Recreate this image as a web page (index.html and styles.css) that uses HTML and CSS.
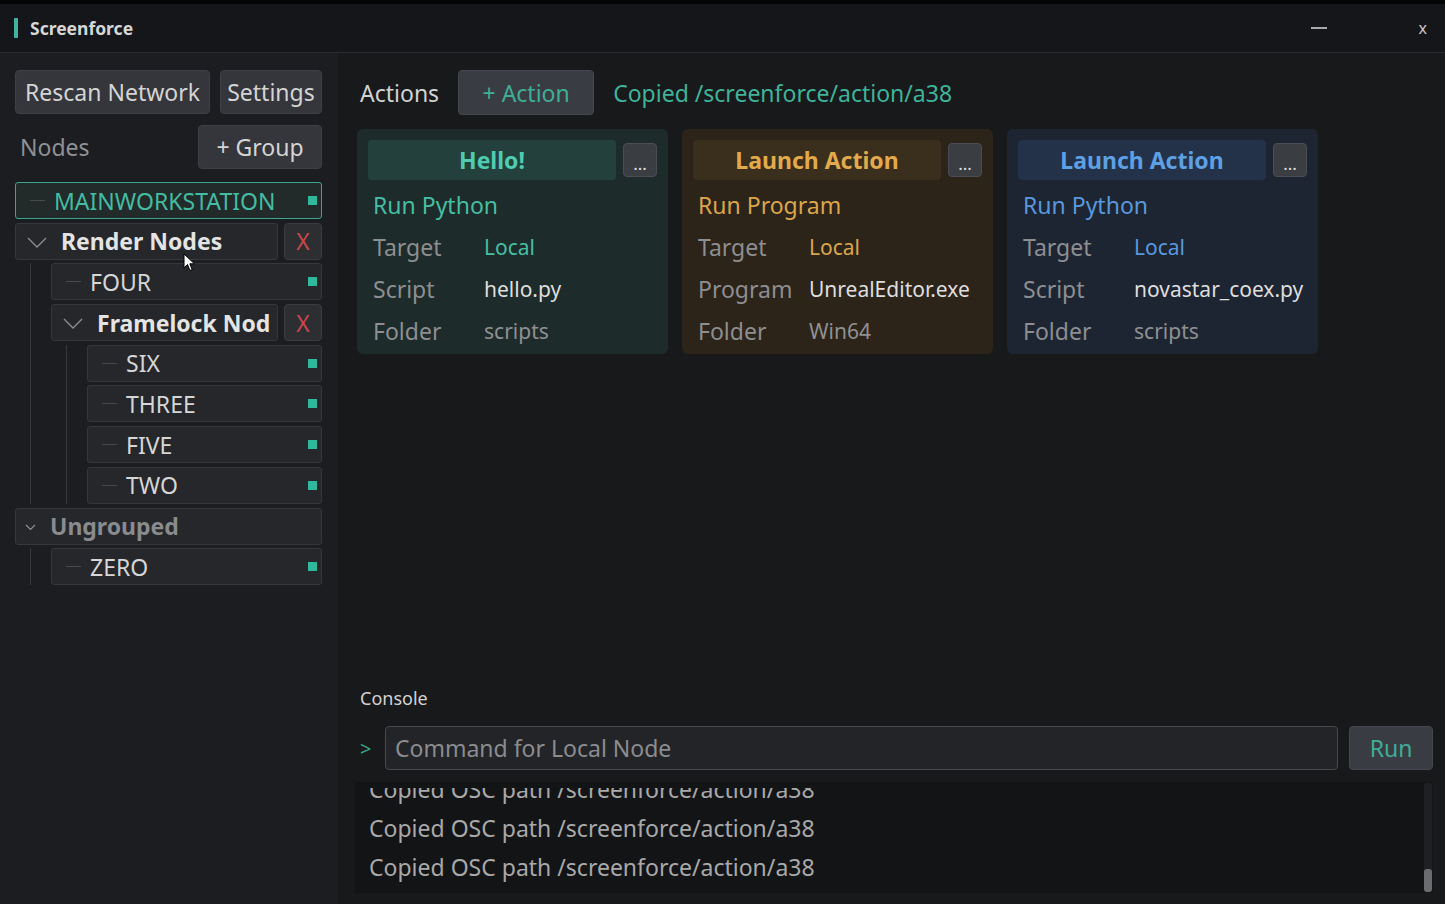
FILE: index.html
```html
<!DOCTYPE html>
<html lang="en">
<head>
    <meta charset="UTF-8">
    <meta name="viewport" content="width=device-width, initial-scale=1.0">
    <title>Screenforce</title>
    <link rel="stylesheet" href="styles.css">
</head>
<body>
<div class="window">
    <!-- title bar -->
    <header class="titlebar">
        <span class="accent"></span>
        <span class="app-name">Screenforce</span>
        <span class="win-btn minimize"><span class="min-line"></span></span>
        <span class="win-btn close">x</span>
    </header>

    <div class="layout">
        <!-- left panel: nodes -->
        <aside class="sidebar">
            <div class="side-row">
                <button class="btn">Rescan Network</button>
                <button class="btn fill">Settings</button>
            </div>
            <div class="side-row nodes-row">
                <span class="label">Nodes</span>
                <button class="btn group-btn">+ Group</button>
            </div>

            <div class="tree">
                <div class="node active">
                    <span class="dash"></span><span class="node-name">MAINWORKSTATION</span><span class="status"></span>
                </div>

                <div class="group">
                    <div class="group-head">
                        <div class="group-title">
                            <svg class="chevron" width="20" height="11" viewBox="0 0 20 11"><polyline points="1,1 10,10 19,1" fill="none" stroke="#8d8f93" stroke-width="1.3"/></svg>
                            <span>Render Nodes</span>
                        </div>
                        <button class="del">X</button>
                    </div>
                    <div class="children">
                        <div class="node">
                            <span class="dash"></span><span class="node-name">FOUR</span><span class="status"></span>
                        </div>
                        <div class="group">
                            <div class="group-head">
                                <div class="group-title">
                                    <svg class="chevron" width="20" height="11" viewBox="0 0 20 11"><polyline points="1,1 10,10 19,1" fill="none" stroke="#8d8f93" stroke-width="1.3"/></svg>
                                    <span>Framelock Nod</span>
                                </div>
                                <button class="del">X</button>
                            </div>
                            <div class="children">
                                <div class="node"><span class="dash"></span><span class="node-name">SIX</span><span class="status"></span></div>
                                <div class="node"><span class="dash"></span><span class="node-name">THREE</span><span class="status"></span></div>
                                <div class="node"><span class="dash"></span><span class="node-name">FIVE</span><span class="status"></span></div>
                                <div class="node"><span class="dash"></span><span class="node-name">TWO</span><span class="status"></span></div>
                            </div>
                        </div>
                    </div>
                </div>

                <div class="group">
                    <div class="group-head">
                        <div class="group-title ungrouped">
                            <svg class="chevron small" width="11" height="7" viewBox="0 0 11 7"><polyline points="1,1 5.5,5.5 10,1" fill="none" stroke="#8d8f93" stroke-width="1.2"/></svg>
                            <span>Ungrouped</span>
                        </div>
                    </div>
                    <div class="children">
                        <div class="node"><span class="dash"></span><span class="node-name">ZERO</span><span class="status"></span></div>
                    </div>
                </div>
            </div>

            <!-- mouse pointer from the capture -->
            <svg class="cursor" width="14" height="20" viewBox="0 0 14 20"><path d="M1 1 L1 15 L4.5 11.5 L7 17.5 L9.2 16.6 L6.8 10.8 L11.5 10.8 Z" fill="#fff" stroke="#000" stroke-width="1"/></svg>
        </aside>

        <!-- right panel: actions + console -->
        <main class="main">
            <div class="actions-head">
                <span class="label light">Actions</span>
                <button class="btn action-btn">+ Action</button>
                <span class="copied">Copied /screenforce/action/a38</span>
            </div>

            <div class="cards">
                <div class="card teal">
                    <div class="card-top">
                        <div class="card-title">Hello!</div>
                        <button class="more">...</button>
                    </div>
                    <div class="card-kind">Run Python</div>
                    <div class="field"><span class="key">Target</span><span class="val target">Local</span></div>
                    <div class="field"><span class="key">Script</span><span class="val main-val">hello.py</span></div>
                    <div class="field"><span class="key">Folder</span><span class="val">scripts</span></div>
                </div>

                <div class="card amber">
                    <div class="card-top">
                        <div class="card-title">Launch Action</div>
                        <button class="more">...</button>
                    </div>
                    <div class="card-kind">Run Program</div>
                    <div class="field"><span class="key">Target</span><span class="val target">Local</span></div>
                    <div class="field"><span class="key">Program</span><span class="val main-val">UnrealEditor.exe</span></div>
                    <div class="field"><span class="key">Folder</span><span class="val">Win64</span></div>
                </div>

                <div class="card blue">
                    <div class="card-top">
                        <div class="card-title">Launch Action</div>
                        <button class="more">...</button>
                    </div>
                    <div class="card-kind">Run Python</div>
                    <div class="field"><span class="key">Target</span><span class="val target">Local</span></div>
                    <div class="field"><span class="key">Script</span><span class="val main-val">novastar_coex.py</span></div>
                    <div class="field"><span class="key">Folder</span><span class="val">scripts</span></div>
                </div>
            </div>

            <div class="console">
                <div class="console-label">Console</div>
                <div class="prompt-row">
                    <span class="prompt">&gt;</span>
                    <input class="cmd" type="text" placeholder="Command for Local Node">
                    <button class="btn run-btn">Run</button>
                </div>
                <div class="log">
                    <div class="log-lines">
                        <div class="log-line">Copied OSC path /screenforce/action/a38</div>
                        <div class="log-line">Copied OSC path /screenforce/action/a38</div>
                        <div class="log-line">Copied OSC path /screenforce/action/a38</div>
                    </div>
                    <div class="scroll-track"><div class="scroll-thumb"></div></div>
                </div>
            </div>
        </main>
    </div>
</div>
</body>
</html>
```

FILE: styles.css
```css
body {
    margin: 0;
    background-color: #000;
    font-family: "Noto Sans", "Open Sans", sans-serif;
    color: #d4d4d4;
    overflow: hidden;
}

.window {
    width: 1445px;
    height: 904px;
    display: flex;
    flex-direction: column;
}

/* Title bar */
.titlebar {
    height: 48px;
    border-top: 4px solid #050506;
    border-bottom: 1px solid #2a2b2e;
    background-color: #151619;
    display: flex;
    align-items: center;
    padding-left: 14px;
    flex: none;
}
.accent {
    width: 4px;
    height: 20px;
    background-color: #3fb59e;
    border-radius: 1px;
    margin-right: 12px;
}
.app-name {
    font-size: 17.5px;
    font-weight: bold;
    color: #d6d6d6;
}
.win-btn {
    color: #c8c8c8;
}
.minimize {
    margin-left: auto;
    width: 16px;
    height: 20px;
    display: flex;
    align-items: center;
    margin-right: 92px;
}
.min-line {
    display: block;
    width: 16px;
    height: 2px;
    background-color: #a8a8a8;
}
.close {
    font-size: 16px;
    margin-right: 18px;
}

.layout {
    flex: 1;
    display: flex;
    min-height: 0;
}

/* Buttons */
.btn {
    font-family: inherit;
    font-size: 23px;
    color: #d4d4d4;
    background-color: #34363b;
    border: 1px solid #3e4045;
    border-radius: 4px;
    height: 44px;
    padding: 0 9px;
    white-space: nowrap;
    flex: none;
    cursor: pointer;
}
.btn.fill {
    flex: 1;
    padding: 0;
}

/* Sidebar */
.sidebar {
    position: relative;
    width: 338px;
    flex: none;
    box-sizing: border-box;
    background-color: #1c1d20;
    padding: 17px 16px 0 15px;
}
.side-row {
    display: flex;
    gap: 10px;
}
.nodes-row {
    margin-top: 11px;
    justify-content: space-between;
    align-items: center;
    height: 44px;
}
.label {
    font-size: 23px;
    color: #8f9094;
    padding-left: 5px;
}
.label.light {
    color: #d2d2d2;
    padding-left: 0;
}
.group-btn {
    width: 124px;
}

.tree {
    margin-top: 13px;
    display: flex;
    flex-direction: column;
    gap: 3.7px;
}
.group,
.children {
    display: flex;
    flex-direction: column;
    gap: 3.7px;
}
.children {
    margin-left: 15px;
    padding-left: 20px;
    border-left: 1px solid #36383c;
}
.node {
    height: 37px;
    box-sizing: border-box;
    background-color: #25272b;
    border: 1px solid #35373b;
    border-radius: 3px;
    display: flex;
    align-items: center;
    padding: 0 4px 0 14px;
}
.node.active {
    background-color: #222a2a;
    border-color: #3aa690;
}
.dash {
    width: 15px;
    height: 1px;
    background-color: #47494d;
    margin-right: 9px;
}
.node-name {
    font-size: 23px;
    color: #d6d6d6;
    flex: 1;
}
.node.active .node-name {
    color: #44bca1;
}
.status {
    width: 9px;
    height: 9px;
    background-color: #30b89c;
}

.group-head {
    display: flex;
    gap: 6px;
    height: 37px;
}
.group-title {
    flex: 1;
    min-width: 0;
    box-sizing: border-box;
    background-color: #25272b;
    border: 1px solid #35373b;
    border-radius: 3px;
    display: flex;
    align-items: center;
    padding-left: 11px;
    font-size: 23px;
    font-weight: bold;
    color: #e4e4e4;
    white-space: nowrap;
    overflow: hidden;
}
.chevron {
    flex: none;
    margin-right: 14px;
    margin-top: 2px;
}
.group-title.ungrouped {
    color: #8a8b8e;
    padding-left: 9px;
}
.chevron.small {
    margin-right: 14px;
}
.del {
    width: 38px;
    height: 37px;
    font-family: inherit;
    font-size: 23px;
    color: #c6474b;
    background-color: #2c2e32;
    border: 1px solid #3a3c40;
    border-radius: 4px;
    padding: 0;
}

.cursor {
    position: absolute;
    left: 183px;
    top: 200px;
}

/* Main panel */
.main {
    flex: 1;
    background-color: #18191b;
    padding: 17px 12px 11px 17px;
    display: flex;
    flex-direction: column;
}
.actions-head {
    display: flex;
    align-items: center;
    gap: 19px;
    padding-left: 5px;
    height: 45px;
}
.action-btn {
    width: 136px;
    height: 45px;
    color: #3fae97;
    background-color: #393c42;
    border-color: #44474d;
}
.copied {
    font-size: 23px;
    color: #3fb39a;
}

.cards {
    display: flex;
    gap: 14px;
    margin-top: 14px;
    margin-left: 2px;
}
.card {
    width: 311px;
    height: 225px;
    box-sizing: border-box;
    border-radius: 6px;
    padding: 11px 11px 2px;
}
.card-top {
    display: flex;
    gap: 7px;
    margin-bottom: 4px;
}
.card-title {
    width: 248px;
    height: 40px;
    border-radius: 4px;
    display: flex;
    align-items: center;
    justify-content: center;
    font-size: 23px;
    font-weight: bold;
}
.more {
    width: 34px;
    height: 34px;
    margin-top: 3px;
    font-family: inherit;
    font-size: 17px;
    line-height: 1;
    color: #e0e0e0;
    background-color: #3a3d42;
    border: 1px solid #4a4d53;
    border-radius: 4px;
    padding: 6px 0 0;
}
.card-kind {
    height: 42px;
    display: flex;
    align-items: center;
    padding-left: 5px;
    font-size: 23px;
}
.field {
    height: 42px;
    display: grid;
    grid-template-columns: 111px 1fr;
    align-items: center;
    padding-left: 5px;
}
.key {
    font-size: 23px;
    color: #8d8e90;
}
.val {
    font-size: 21px;
    color: #8f9092;
}
.val.main-val {
    color: #dedede;
}

.card.teal { background-color: #1e2b2b; }
.card.teal .card-title { background-color: #24403c; color: #4fcdb0; }
.card.teal .card-kind,
.card.teal .target { color: #45bea2; }

.card.amber { background-color: #2c2419; }
.card.amber .card-title { background-color: #3a2e1d; color: #e3aa4c; }
.card.amber .card-kind,
.card.amber .target { color: #dba64a; }

.card.blue { background-color: #1d2533; }
.card.blue .card-title { background-color: #243249; color: #5ea0e4; }
.card.blue .card-kind,
.card.blue .target { color: #5898de; }

/* Console */
.console {
    margin-top: auto;
}
.console-label {
    font-size: 18px;
    line-height: 24px;
    color: #d2d2d2;
    padding-left: 5px;
    margin-bottom: 16px;
}
.prompt-row {
    display: flex;
    align-items: center;
    padding-left: 5px;
    height: 44px;
}
.prompt {
    font-size: 20px;
    color: #35a589;
    width: 13px;
    margin-right: 12px;
}
.cmd {
    flex: 1;
    height: 44px;
    box-sizing: border-box;
    font-family: inherit;
    font-size: 23px;
    color: #d4d4d4;
    background-color: #222427;
    border: 1px solid #46494e;
    border-radius: 4px;
    padding: 0 9px;
    outline: none;
}
.cmd::placeholder {
    color: #8b8c8f;
}
.run-btn {
    width: 84px;
    margin-left: 11px;
    color: #3fae97;
    background-color: #393c42;
    border-color: #44474d;
}
.log {
    margin-top: 12px;
    height: 111px;
    box-sizing: border-box;
    padding-top: 6px;
    background-color: #131416;
    display: flex;
}
.log-lines {
    flex: 1;
    display: flex;
    flex-direction: column;
    justify-content: flex-end;
    overflow: hidden;
    padding: 0 14px 6px;
}
.log-line {
    flex: none;
    font-size: 23px;
    line-height: 39px;
    color: #a9a9a9;
    white-space: nowrap;
}
.scroll-track {
    width: 8px;
    margin: -5px 1px 1px 0;
    background-color: #1f2023;
    border-radius: 3px;
    display: flex;
    align-items: flex-end;
}
.scroll-thumb {
    width: 8px;
    height: 23px;
    background-color: #6b6c6f;
    border-radius: 3px;
}
```
